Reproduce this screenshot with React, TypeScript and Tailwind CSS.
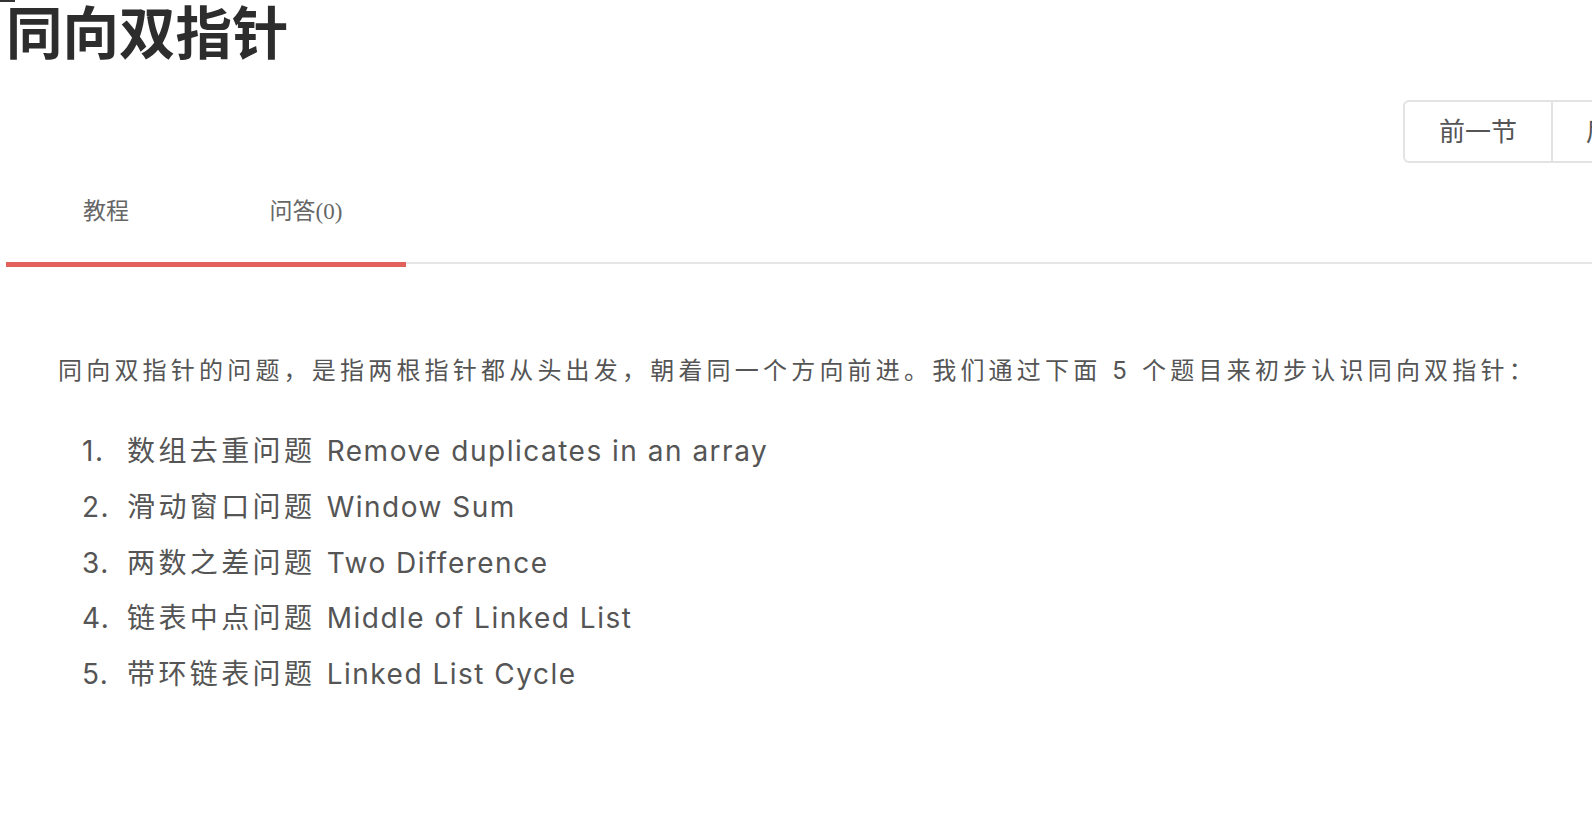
import React from 'react';

const items: [string, string][] = [
  ['数组去重问题', 'Remove duplicates in an array'],
  ['滑动窗口问题', 'Window Sum'],
  ['两数之差问题', 'Two Difference'],
  ['链表中点问题', 'Middle of Linked List'],
  ['带环链表问题', 'Linked List Cycle'],
];

const sans = 'font-["Inter","Noto_Sans_CJK_SC",sans-serif]';

const App: React.FC = () => {
  return (
    <div className={`relative w-full min-h-screen overflow-hidden bg-white ${sans}`}>
      <div className="absolute left-0 top-0 h-[2px] w-[15px] bg-[#333]" />

      {/* Title */}
      <h1 className="h-[68px] pl-[6px] text-[56.5px] font-bold leading-[68px] text-[#2d2d2d]">
        同向双指针
      </h1>

      {/* Prev / next */}
      <div className="mt-[32px] flex justify-end">
        <div className="-mr-[107px] flex h-[63px] rounded-[6px] border-2 border-[#e3e3e3]">
          <button className="w-[146px] text-[26px] text-[#555]">前一节</button>
          <button className="w-[146px] border-l-2 border-[#e3e3e3] text-[26px] text-[#555]">后一节</button>
        </div>
      </div>

      {/* Tabs */}
      <div className="ml-[6px]">
        <div className='flex h-[99px] items-center font-["Liberation_Serif","Noto_Sans_CJK_SC",serif] text-[23px] text-[#666]'>
          <div className="w-[200px] text-center">教程</div>
          <div className="w-[200px] text-center">问答(0)</div>
        </div>
        <div className="relative h-[2px] bg-[#e6e6e6]">
          <div className="absolute left-0 top-0 h-[5px] w-[400px] bg-[#e2615a]" />
        </div>
      </div>

      {/* Content */}
      <div className="pl-[58px] pt-[87px] text-[#555]">
        <p className="text-[24px] leading-[40px] tracking-[4.2px]">
          同向双指针的问题，是指两根指针都从头出发，朝着同一个方向前进。我们通过下面 5 个题目来初步认识同向双指针：
        </p>
        <ol className="mt-[33px]">
          {items.map(([zh, en], i) => (
            <li key={i} className="flex text-[28px] leading-[55.8px] tracking-[1.5px] whitespace-pre">
              <span className="ml-[24px] w-[45px]">{i + 1}.</span>
              <span className="tracking-[3.4px]">{zh} </span>
              <span>{en}</span>
            </li>
          ))}
        </ol>
      </div>
    </div>
  );
};

export default App;
